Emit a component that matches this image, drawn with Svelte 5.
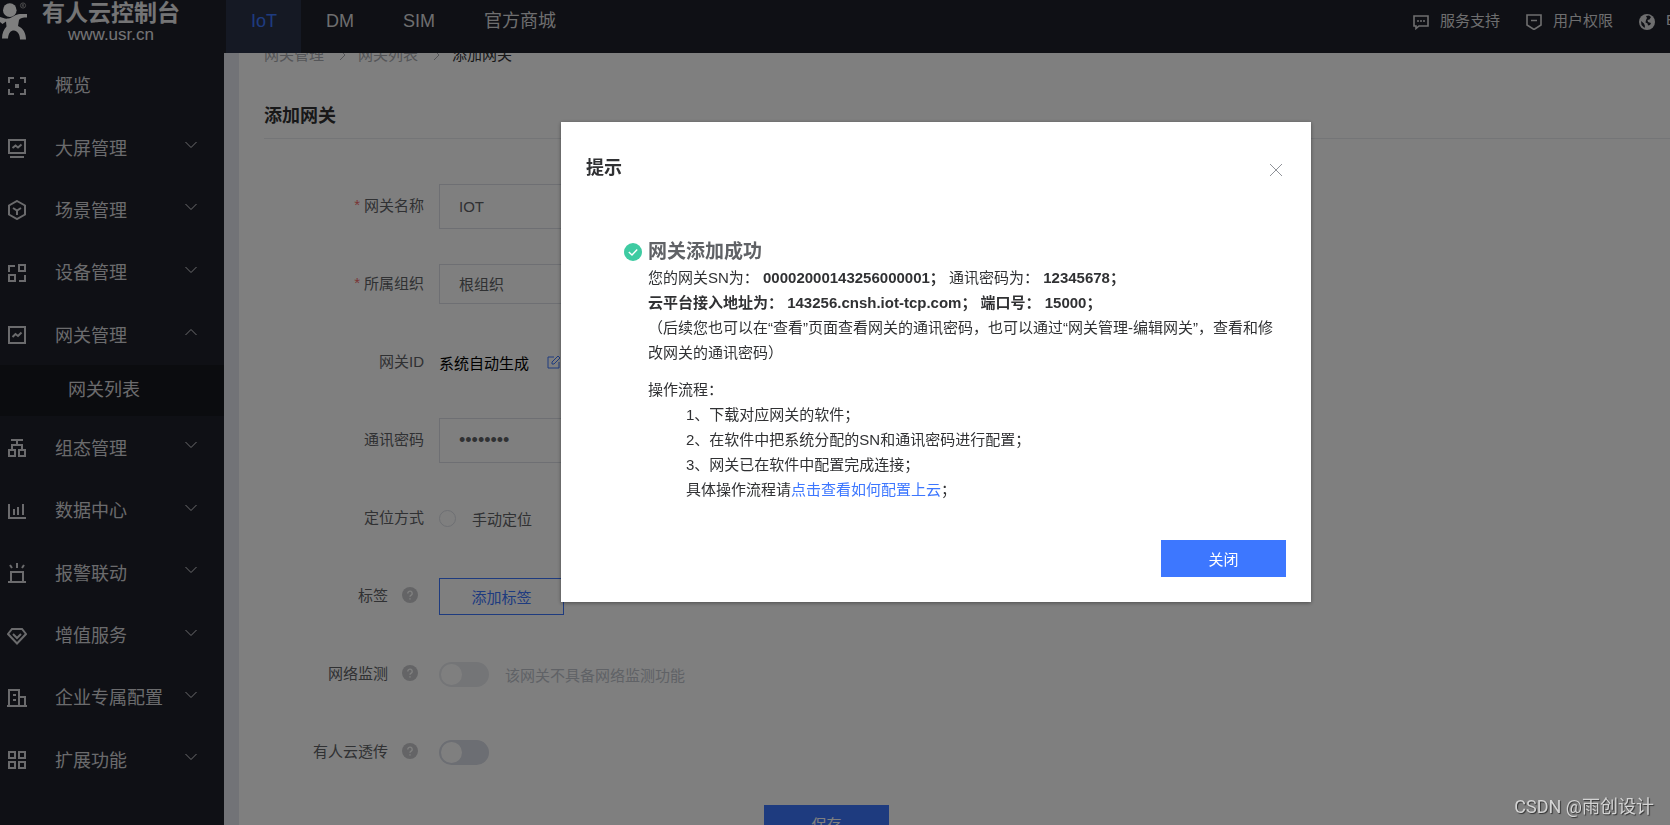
<script>
  const tabs = ["IoT", "DM", "SIM", "官方商城"];
  let activeTab = $state("IoT");

  const menu = [
    { name: "概览", icon: "M2 7V2H7M13 2H18V7M18 13V18H13M7 18H2V13M8 9H12M8 11H12" },
    { name: "大屏管理", icon: "M2 2H18V15H2ZM3 19H17M5.5 10 8.5 7.5 11 9.5 14.5 6.5", children: [] },
    { name: "场景管理", icon: "M10 1 18 5.5V14.5L10 19 2 14.5V5.5ZM6 8 10 10.5 14 8M10 10.5V15", children: [] },
    { name: "设备管理", icon: "M2 9V3H8M12 2H18V8H12ZM2 12H8V18H2ZM12 18H18V12", children: [] },
    { name: "网关管理", icon: "M2 2H18V18H2ZM5.5 12 8.5 9 11 11 14.5 7.5", open: true, children: ["网关列表"] },
    { name: "组态管理", icon: "M4 2H16M10 2V7M5 12V7H15V12M2 12H8V18H2ZM12 12H18V18H12Z", children: [] },
    { name: "数据中心", icon: "M2 3V17H19M7 8V14M11 6V14M16 3V14", children: [] },
    { name: "报警联动", icon: "M1 19H19M4 19V9H16V19M10 0V5M3 2 5 5M17 2 15 5", children: [] },
    { name: "增值服务", icon: "M5 3H15L19 8 10 17.5 1 8ZM6 8 10 12 14 8", children: [] },
    { name: "企业专属配置", icon: "M0 18H20M2 18V2H12V18M12 9H18V18M6 7H9M6 12H9", children: [] },
    { name: "扩展功能", icon: "M2 2H8V8H2ZM12 2H18V8H12ZM2 12H8V18H2ZM12 12H18V18H12Z", children: [] }
  ];

  const steps = [
    "1、下载对应网关的软件；",
    "2、在软件中把系统分配的SN和通讯密码进行配置；",
    "3、网关已在软件中配置完成连接；"
  ];

  let name = $state("IOT");
  let org = $state("根组织");
  let password = $state("12345678");
  let passthrough = $state(false);
  let showDialog = $state(true);
</script>

{#snippet help()}
  <svg class="help" viewBox="0 0 16 16" aria-hidden="true">
    <circle cx="8" cy="8" r="8" fill="#c8c9cc" />
    <path d="M5.8 6.4a2.2 2.2 0 1 1 3.4 1.8c-.8.5-1.2.8-1.2 1.6M8 11.2v1.4" fill="none" stroke="#fff" stroke-width="1.4" />
  </svg>
{/snippet}

<div class="app">
  <header>
    <div class="logo">
      <svg viewBox="0 0 28 41" aria-hidden="true">
        <ellipse cx="9.8" cy="10.2" rx="6.8" ry="6.9" fill="#fff" />
        <path
          d="M0 17C3 18 5 19 8 18.5C13 18 15 14 20 14H27V17.5C23 17.5 20 18 19 20L18 26C23 28 26 33 26 39.5H20C20 34 17 30.5 14 30.5C10.5 30.5 8.5 33 8 38.5H2C2 33 4 29 6.5 26.5L6 21.5 2.5 24 0 22Z"
          fill="#fff"
        />
        <circle cx="23" cy="5.5" r="2.6" fill="none" stroke="#aaa" stroke-width=".8" />
        <path d="M22.2 7V4.2H23.6V5.6H22.2M23 5.6 24 7" fill="none" stroke="#aaa" stroke-width=".6" />
      </svg>
      <div class="brand">
        <strong>有人云控制台</strong>
        <span>www.usr.cn</span>
      </div>
    </div>
    <nav class="tabs">
      {#each tabs as tab}
        <button class:active={tab === activeTab} onclick={() => (activeTab = tab)}>{tab}</button>
      {/each}
    </nav>
    <div class="tools">
      <a href="#support">
        <svg viewBox="0 0 16 16" aria-hidden="true">
          <path d="M1 2H15V12H6L3 14.5V12H1Z" fill="none" stroke="currentColor" stroke-width="1.6" />
          <path d="M4 7H6M7 7H9M10 7H12" stroke="currentColor" stroke-width="1.6" />
        </svg>
        服务支持
      </a>
      <a href="#auth">
        <svg viewBox="0 0 16 16" aria-hidden="true">
          <path d="M1 1H15V11L8 15.5 1 11ZM5 6.5H11" fill="none" stroke="currentColor" stroke-width="1.6" />
        </svg>
        用户权限
      </a>
      <a href="#lang" class="lang">
        <svg viewBox="0 0 16 16" aria-hidden="true">
          <circle cx="8" cy="8" r="8" fill="currentColor" />
          <path d="M10 1.5 12 3 10.5 5.5 8.5 6 9 8 12 9 11 11 9 11.5 8.5 9.5 6.5 8.5 7 6 8 4 7 2ZM2 7 5 9.5 6 12 5.5 14 2.5 11Z" fill="#1e202a" />
        </svg>
        <span>E</span>
      </a>
    </div>
  </header>

  <div class="body">
    <aside>
      <ul class="menu">
        {#each menu as item}
          <li class="item">
            <button>
              <svg class="icon" viewBox="0 0 20 20" aria-hidden="true"><path d={item.icon} /></svg>
              <span>{item.name}</span>
              {#if item.children}
                <svg class="arrow" class:open={item.open} viewBox="0 0 12 8" aria-hidden="true"><path d="M.5 1 6 6.5 11.5 1" /></svg>
              {/if}
            </button>
          </li>
          {#each item.children ?? [] as child}
            <li class="sub"><a href="#list">{child}</a></li>
          {/each}
        {/each}
      </ul>
    </aside>

    <main>
      <div class="panel">
        <nav class="crumbs">
          <a href="#gateway">网关管理</a>
          <svg viewBox="0 0 8 12" aria-hidden="true"><path d="M1 1 6 6 1 11" /></svg>
          <a href="#list">网关列表</a>
          <svg viewBox="0 0 8 12" aria-hidden="true"><path d="M1 1 6 6 1 11" /></svg>
          <span>添加网关</span>
        </nav>
        <h1>添加网关</h1>

        <form onsubmit={(e) => e.preventDefault()}>
          <div class="row">
            <label for="name"><em>*</em> 网关名称</label>
            <input id="name" class="field" type="text" bind:value={name} />
          </div>
          <div class="row">
            <label for="org"><em>*</em> 所属组织</label>
            <select id="org" class="field short" bind:value={org}>
              <option>根组织</option>
            </select>
          </div>
          <div class="row">
            <span class="label">网关ID</span>
            <span class="auto">系统自动生成</span>
            <button type="button" class="edit" aria-label="编辑">
              <svg viewBox="0 0 14 14"><path d="M7 2H1V13H12V7M5 9V7L11 1 13 3 7 9Z" /></svg>
            </button>
          </div>
          <div class="row">
            <label for="password">通讯密码</label>
            <input id="password" class="field secret" type="password" bind:value={password} />
          </div>
          <div class="row">
            <span class="label">定位方式</span>
            <input id="manual" class="radio" type="radio" name="locate" />
            <label class="after" for="manual">手动定位</label>
          </div>
          <div class="row">
            <span class="label">标签 {@render help()}</span>
            <button type="button" class="btn plain">添加标签</button>
          </div>
          <div class="row">
            <label for="monitor">网络监测 {@render help()}</label>
            <input id="monitor" class="switch" type="checkbox" disabled />
            <span class="after muted">该网关不具备网络监测功能</span>
          </div>
          <div class="row">
            <label for="pass">有人云透传 {@render help()}</label>
            <input id="pass" class="switch" type="checkbox" bind:checked={passthrough} />
          </div>
          <div class="actions">
            <button type="submit" class="btn primary">保存</button>
          </div>
        </form>
      </div>
    </main>
  </div>
</div>

{#if showDialog}
  <div class="mask">
    <div class="dialog" role="dialog" aria-labelledby="dialog-title">
      <div class="dialog-head">
        <h2 id="dialog-title">提示</h2>
        <button class="close" aria-label="Close" onclick={() => (showDialog = false)}>
          <svg viewBox="0 0 14 14"><path d="M1 1 13 13M13 1 1 13" /></svg>
        </button>
      </div>
      <div class="dialog-body">
        <h3>
          <svg viewBox="0 0 18 18" aria-hidden="true">
            <circle cx="9" cy="9" r="9" fill="#3ecba2" />
            <path d="M4.8 9 8 12 13.2 6.5" fill="none" stroke="#fff" stroke-width="1.4" />
          </svg>
          网关添加成功
        </h3>
        <p>
          您的网关SN为： <b>00002000143256000001；</b> 通讯密码为： <b>12345678；</b><br />
          <b>云平台接入地址为： 143256.cnsh.iot-tcp.com； 端口号： 15000；</b><br />
          （后续您也可以在“查看”页面查看网关的通讯密码，也可以通过“网关管理-编辑网关”，查看和修改网关的通讯密码）
        </p>
        <p>操作流程：</p>
        <ul>
          {#each steps as step}
            <li>{step}</li>
          {/each}
          <li>具体操作流程请<a href="#guide">点击查看如何配置上云</a>；</li>
        </ul>
      </div>
      <div class="dialog-foot">
        <button class="btn primary" onclick={() => (showDialog = false)}>关闭</button>
      </div>
    </div>
  </div>
{/if}

<div class="watermark">CSDN @雨创设计</div>

<style>
  :global(body) {
    overflow: hidden;
    font-family: "Liberation Sans", "Noto Sans CJK SC", sans-serif;
    font-size: 15px;
    color: #606266;
  }

  :global(*) {
    box-sizing: border-box;
  }

  button,
  input,
  select {
    font: inherit;
    color: inherit;
    background: none;
    border: none;
    padding: 0;
    margin: 0;
    outline: none;
  }

  button {
    cursor: pointer;
  }

  a {
    color: inherit;
    text-decoration: none;
  }

  ul {
    list-style: none;
    margin: 0;
    padding: 0;
  }

  svg {
    flex: none;
  }

  .app {
    display: flex;
    flex-direction: column;
    height: 100vh;
  }

  header {
    display: flex;
    flex: none;
    height: 53px;
    background: #1e202a;
    color: #dcdcde;
    z-index: 1;
  }

  .logo {
    display: flex;
    width: 226px;
    gap: 14px;
  }

  .logo svg {
    width: 28px;
    height: 41px;
  }

  .brand {
    display: flex;
    flex-direction: column;
    align-items: center;
    color: #e8e8ea;
  }

  .brand strong {
    font-size: 23px;
    line-height: 26px;
  }

  .brand span {
    font-size: 17px;
    line-height: 18px;
  }

  .tabs {
    display: flex;
  }

  .tabs button {
    padding: 0 24px 12px 25px;
    font-size: 18px;
    line-height: 40px;
  }

  .tabs .active {
    background: #2a3348;
    color: #3d77ff;
  }

  .tools {
    display: flex;
    gap: 26px;
    margin-left: auto;
  }

  .tools a {
    display: flex;
    align-items: center;
    gap: 11px;
    height: 39px;
  }

  .tools svg {
    width: 16px;
    height: 16px;
    margin-top: 4px;
  }

  .tools .lang span {
    width: 4px;
    overflow: hidden;
  }

  .body {
    display: flex;
    flex: 1;
    min-height: 0;
  }

  aside {
    display: flex;
    flex: none;
    width: 224px;
    padding-bottom: 35px;
    background: #1e202a;
    color: #d6d7da;
    font-size: 18px;
  }

  .menu {
    display: flex;
    flex: 1;
    flex-direction: column;
  }

  .item {
    display: flex;
    flex: 1;
  }

  .item button {
    display: flex;
    flex: 1;
    align-items: center;
    padding: 0 27px 0 7px;
  }

  .icon {
    width: 20px;
    height: 20px;
    margin: 3px 28px 0 0;
    fill: none;
    stroke: currentColor;
    stroke-width: 2;
  }

  .arrow {
    width: 12px;
    height: 8px;
    margin: 0 0 3px auto;
    fill: none;
    stroke: currentColor;
  }

  .arrow.open {
    transform: rotate(180deg);
  }

  .sub a {
    display: block;
    padding-left: 68px;
    line-height: 51px;
    background: #16181e;
  }

  main {
    flex: 1;
    padding-left: 15px;
    overflow: hidden;
    background: #e4e7ee;
  }

  /* the page is scrolled a little, so the breadcrumb slides under the header */
  .panel {
    display: flow-root;
    height: 100%;
    padding: 0 0 0 25px;
    background: #fff;
  }

  .crumbs {
    display: flex;
    align-items: center;
    gap: 14px;
    margin-top: -9px;
    line-height: 22px;
    color: #a9abb0;
  }

  .crumbs svg {
    width: 8px;
    height: 12px;
    margin: 0 -3px 0 1px;
    fill: none;
    stroke: currentColor;
  }

  .crumbs span {
    color: #303133;
  }

  h1 {
    margin: 36px 0 28px;
    padding-bottom: 8px;
    border-bottom: 1px solid #e8eaee;
    font-size: 18px;
    line-height: 28px;
    color: #303133;
  }

  form {
    max-width: 1125px;
  }

  .row {
    display: flex;
    align-items: center;
    height: 78px;
  }

  .row > :first-child {
    display: flex;
    align-items: center;
    justify-content: flex-end;
    width: 160px;
    margin-right: 15px;
    padding-bottom: 3px;
  }

  .row em {
    margin-right: 4px;
    font-style: normal;
    color: #f56c6c;
  }

  .help {
    width: 16px;
    height: 16px;
    margin: 0 6px 0 14px;
  }

  .field {
    width: 500px;
    height: 45px;
    padding: 0 19px;
    border: 1px solid #dcdfe6;
  }

  .short {
    height: 40px;
    appearance: none;
  }

  .secret {
    font-size: 18px;
  }

  .auto {
    color: #000;
  }

  .edit {
    margin-left: 18px;
  }

  .edit svg {
    display: block;
    width: 14px;
    height: 14px;
    fill: none;
    stroke: #3d77ff;
  }

  .radio {
    width: 17px;
    height: 17px;
    border: 1px solid #dcdfe6;
    border-radius: 50%;
    appearance: none;
  }

  .after {
    margin-left: 16px;
  }

  .muted {
    color: #c0c4cc;
  }

  .switch {
    width: 50px;
    height: 25px;
    padding: 2px;
    border-radius: 13px;
    background: #d8dce6;
    appearance: none;
  }

  .switch::before {
    content: "";
    display: block;
    width: 21px;
    height: 21px;
    border-radius: 50%;
    background: #fff;
  }

  .switch:checked {
    background: #3d77ff;
  }

  .switch:checked::before {
    margin-left: 25px;
  }

  .switch:disabled {
    background: #e9ebef;
  }

  .btn {
    width: 125px;
    height: 37px;
  }

  .plain {
    border: 1px solid #3d77ff;
    color: #3d77ff;
  }

  .primary {
    background: #3d77ff;
    color: #fff;
  }

  .actions {
    display: flex;
    justify-content: center;
    padding-top: 14px;
  }

  .mask {
    position: fixed;
    inset: 0;
    z-index: 10;
    display: flex;
    align-items: flex-start;
    justify-content: center;
    padding: 122px 0 0 202px;
    background: rgba(0, 0, 0, 0.5);
  }

  .dialog {
    width: 750px;
    padding: 25px;
    background: #fff;
    box-shadow: 0 1px 4px rgba(0, 0, 0, 0.4);
  }

  .dialog-head {
    display: flex;
    align-items: flex-start;
    justify-content: space-between;
    height: 44px;
  }

  h2 {
    margin: 0;
    font-size: 18px;
    line-height: 42px;
    color: #303133;
  }

  .close {
    padding: 16px 3px;
  }

  .close svg {
    display: block;
    width: 14px;
    height: 14px;
    stroke: #909399;
  }

  .dialog-body {
    padding: 48px 5px 38px 62px;
    line-height: 25px;
    color: #303133;
  }

  h3 {
    display: flex;
    align-items: center;
    gap: 6px;
    margin: 0 0 0 -24px;
    font-size: 19px;
    line-height: 26px;
    color: #606266;
  }

  h3 svg {
    width: 18px;
    height: 18px;
  }

  p {
    margin: 0 0 12px;
  }

  p + p {
    margin: 0;
  }

  .dialog-body ul {
    padding-left: 38px;
  }

  .dialog-body a {
    color: #3d77ff;
  }

  .dialog-foot {
    display: flex;
    justify-content: flex-end;
  }

  .watermark {
    position: fixed;
    right: 16px;
    bottom: 7px;
    z-index: 20;
    font-family: Roboto, "Noto Sans CJK SC", sans-serif;
    font-size: 18px;
    line-height: 22px;
    color: #d4d4d4;
    text-shadow: 1px 1px 1px #333;
  }
</style>
